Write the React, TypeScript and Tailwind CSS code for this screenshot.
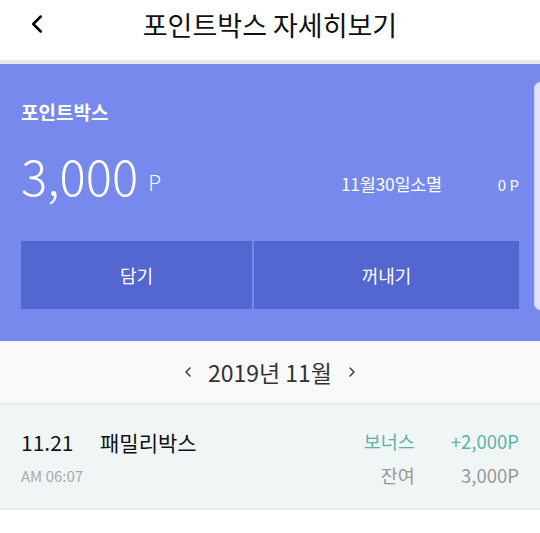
import { ChevronLeft, ChevronRight } from "lucide-react";

const font = { fontFamily: '"Noto Sans CJK KR", "Noto Sans", sans-serif' };

const Header = () => (
  <div className="relative flex h-[64px] items-center justify-center border-b-4 border-[#e9e9e9] bg-white pb-[12px]">
    <ChevronLeft className="absolute left-[22px] top-[9px] text-black" size={30} strokeWidth={2} />
    <h1 className="text-[27px] leading-none text-[#111]">포인트박스 자세히보기</h1>
  </div>
);

const PointPanel = () => (
  <div className="relative bg-[#7789ec] px-[21px] pb-[32px] pt-[38px]">
    <div className="text-[19px] font-bold leading-none text-white">포인트박스</div>
    <div className="mt-[24px] flex items-end text-white">
      <span className="text-[49px] font-light leading-[60px]">3,000</span>
      <span className="mb-[12px] ml-[10px] text-[21px] font-light leading-none">P</span>
      <span className="mb-[13px] ml-auto text-[17.5px] leading-none tracking-[-0.3px]">11월30일소멸</span>
      <span className="mb-[13px] ml-[56px] text-right text-[15px] leading-none">0 P</span>
    </div>
    <div className="mt-[36px] flex gap-[2px]">
      <button className="h-[68px] w-[231px] bg-[#5467d0] text-[18px] text-white">담기</button>
      <button className="h-[68px] flex-1 bg-[#5467d0] text-[18px] text-white">꺼내기</button>
    </div>
    <div className="absolute right-[-6px] top-[18px] h-[228px] w-[12px] rounded-[6px] border border-[#c9cef4] bg-[#dfe2f9]" />
  </div>
);

const MonthBar = () => (
  <div className="flex h-[64px] items-center justify-center gap-[12px] border-b-2 border-[#ebebeb] bg-[#f9f9f9] text-[#333]">
    <ChevronLeft size={16} strokeWidth={2} />
    <span className="text-[23px] leading-none">2019년 11월</span>
    <ChevronRight size={16} strokeWidth={2} />
  </div>
);

const HistoryRow = () => (
  <div className="flex h-[105px] items-start justify-between border-b-2 border-[#ebebeb] bg-[#f0f6f6] px-[21px] pt-[27px]">
    <div>
      <div className="flex items-center text-[21px] leading-none text-[#111]">
        <span className="w-[79px]">11.21</span>
        <span>패밀리박스</span>
      </div>
      <div className="mt-[15px] text-[15px] leading-none text-[#aaa]">AM 06:07</div>
    </div>
    <div className="grid grid-cols-[auto_auto] gap-x-[36px] gap-y-[15px] text-right text-[18.5px] leading-none">
      <span className="text-[#5fb3a5]">보너스</span>
      <span className="text-[#5fb3a5]">+2,000P</span>
      <span className="text-[#999]">잔여</span>
      <span className="text-[#999]">3,000P</span>
    </div>
  </div>
);

export default function App() {
  return (
    <div className="h-[533px] w-[540px] overflow-hidden bg-white" style={font}>
      <Header />
      <PointPanel />
      <MonthBar />
      <HistoryRow />
    </div>
  );
}
